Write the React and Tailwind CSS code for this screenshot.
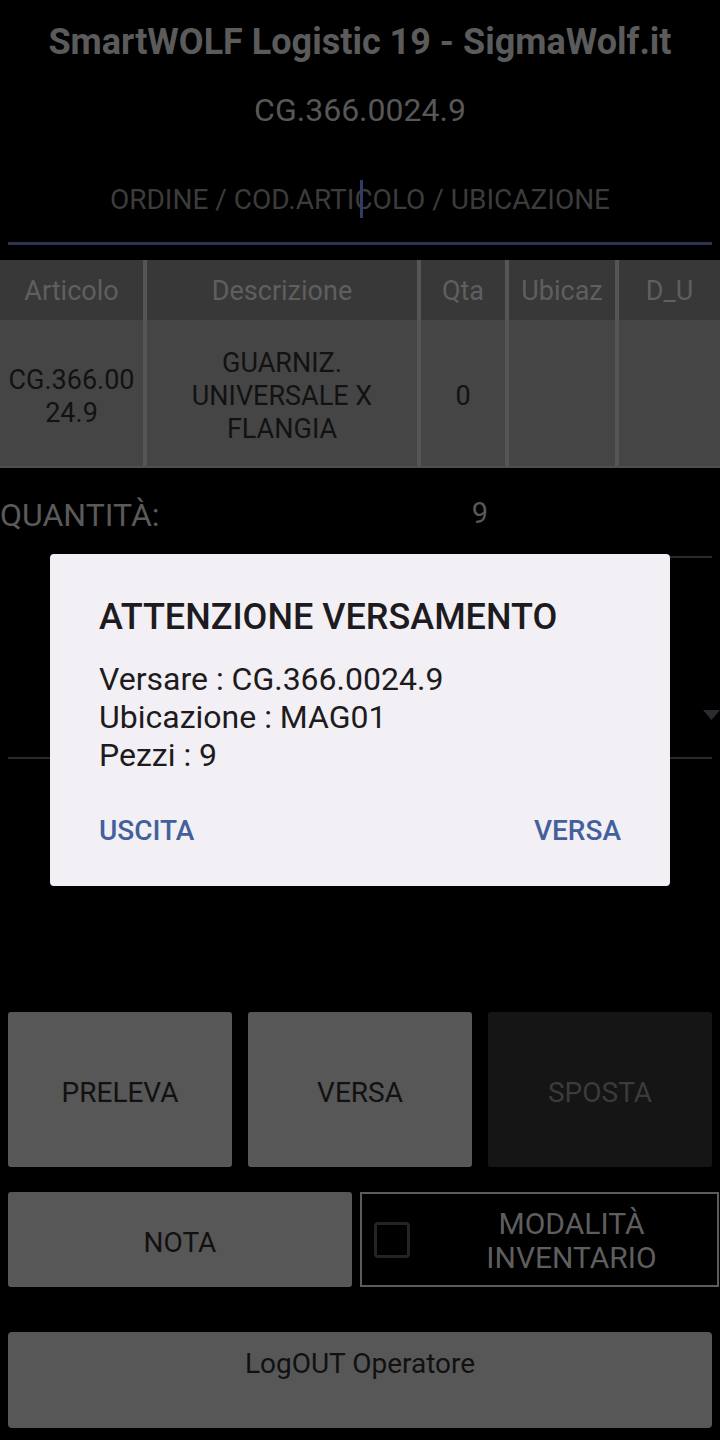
import React from 'react';

const columns = [
  { head: 'Articolo', cell: 'CG.366.00 24.9' },
  { head: 'Descrizione', cell: 'GUARNIZ. UNIVERSALE X FLANGIA' },
  { head: 'Qta', cell: '0' },
  { head: 'Ubicaz', cell: '' },
  { head: 'D_U', cell: '' },
];

function ResultTable() {
  return (
    <div className="mt-[15px] bg-[#555555] border-b-2 border-[#4f4f4f] grid grid-cols-[143px_270px_84px_106px_1fr] gap-x-[4px]">
      {columns.map((c) => (
        <div key={c.head} className="h-[60px] bg-[#383838] flex items-center justify-center pt-[3px] text-[27px] text-[#5f5f5f]">
          {c.head}
        </div>
      ))}
      {columns.map((c) => (
        <div key={c.head + '-cell'} className="h-[146px] bg-[#454545] flex items-center justify-center text-center pt-[7px] text-[27px] leading-[33px] text-[#121212] px-1">
          {c.cell}
        </div>
      ))}
    </div>
  );
}

function ActionButton({ label, disabled }) {
  return (
    <button
      className={
        disabled
          ? 'h-[155px] rounded-[3px] bg-[#151515] text-[#3b3b3b] text-[28px] pt-[6px]'
          : 'h-[155px] rounded-[3px] bg-[#575757] text-[#111111] text-[28px] pt-[6px]'
      }
    >
      {label}
    </button>
  );
}

export default function App() {
  return (
    <div className="relative w-[720px] h-[1440px] bg-black overflow-hidden font-[Roboto,'Noto_Sans',sans-serif] flex flex-col">
      {/* header */}
      <div className="h-[84px] flex items-center justify-center text-[36px] font-bold text-[#5b5b5b]">
        SmartWOLF Logistic 19 - SigmaWolf.it
      </div>
      <div className="h-[52px] flex items-center justify-center text-[32px] text-[#575757]">
        CG.366.0024.9
      </div>

      {/* search field */}
      <div className="px-2 pt-[44px]">
        <div className="relative h-[40px] flex items-center justify-center text-[28px] text-[#3c3c3c]">
          ORDINE / COD.ARTICOLO / UBICAZIONE
          <span className="absolute left-[352px] top-0 w-[3px] h-[38px] bg-[#2f3d66]" />
        </div>
        <div className="mt-[22px] h-[3px] bg-[#2b3350]" />
      </div>

      <ResultTable />

      {/* quantity */}
      <div className="h-[90px] flex">
        <div className="w-[240px] flex items-center pt-[4px] text-[32px] text-[#5a5a5a]">QUANTITÀ:</div>
        <div className="flex-1 mr-2 ml-2 flex items-center justify-center pt-[4px] border-b-2 border-[#2a2a2e] text-[29px] text-[#585858]">
          9
        </div>
      </div>

      {/* spinner */}
      <div className="relative h-[201px] px-2">
        <div className="h-full border-b-2 border-[#2a2a2e]" />
        <svg className="absolute right-0 top-[152px]" width="17" height="10" viewBox="0 0 17 10">
          <polygon points="0,0 17,0 8.5,10" fill="#2a2a30" />
        </svg>
      </div>

      {/* actions */}
      <div className="mt-[253px] px-2 grid grid-cols-3 gap-4">
        <ActionButton label="PRELEVA" />
        <ActionButton label="VERSA" />
        <ActionButton label="SPOSTA" disabled />
      </div>

      <div className="mt-[25px] pl-2 pr-[1px] flex gap-2 h-[95px]">
        <button className="w-[344px] rounded-[3px] bg-[#575757] text-[#111111] text-[28px] pt-[6px]">NOTA</button>
        <div className="flex-1 border-2 border-[#5c5c5c] flex items-center">
          <div className="ml-[12px] w-[36px] h-[36px] rounded-[4px] border-[3px] border-[#242428]" />
          <div className="flex-1 text-center pl-[16px] pt-[3px] text-[30px] leading-[34px] text-[#5e5e5e]">
            MODALITÀ<br />INVENTARIO
          </div>
        </div>
      </div>

      <div className="mt-[45px] mx-2 h-[96px] rounded-[4px] bg-[#575757] text-center pt-[14px] text-[28px] leading-[36px] text-[#111111]">
        LogOUT Operatore
      </div>

      {/* dialog */}
      <div className="absolute left-[50px] top-[554px] w-[620px] h-[332px] rounded-[4px] bg-[#f2f0f5] px-[49px] pt-[41px] text-[#1d1b20]">
        <div className="text-[36px] leading-[44px] font-medium">ATTENZIONE VERSAMENTO</div>
        <div className="mt-[21px] text-[32px] leading-[38px]">
          <div>Versare : CG.366.0024.9</div>
          <div>Ubicazione : MAG01</div>
          <div>Pezzi : 9</div>
        </div>
        <div className="mt-[41px] flex justify-between text-[28px] leading-[32px] font-medium text-[#44609c]">
          <span>USCITA</span>
          <span>VERSA</span>
        </div>
      </div>
    </div>
  );
}
